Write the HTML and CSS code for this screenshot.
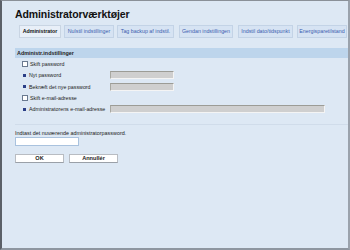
FILE: index.html
```html
<!DOCTYPE html>
<html>
<head>
<meta charset="utf-8">
<link rel="stylesheet" href="styles.css">
</head>
<body>
<div class="frame">
  <h1 class="title">Administratorværktøjer</h1>
  <div class="tabs">
    <span class="tab active t1">Administrator</span>
    <span class="tab t2">Nulstil indstillinger</span>
    <span class="tab t3">Tag backup af indstil.</span>
    <span class="tab t4">Gendan indstillingen</span>
    <span class="tab t5">Indstil dato/tidspunkt</span>
    <span class="tab t6">Energisparetilstand</span>
  </div>
  <div class="section">Administr.indstillinger</div>
  <div class="rows">
    <div class="row"><span class="check"></span><span>Skift password</span></div>
    <div class="row"><span class="bullet"></span><span class="label">Nyt password</span><span class="field short"></span></div>
    <div class="row"><span class="bullet"></span><span class="label">Bekræft det nye password</span><span class="field short"></span></div>
    <div class="row"><span class="check"></span><span>Skift e-mail-adresse</span></div>
    <div class="row"><span class="bullet"></span><span class="label">Administratorens e-mail-adresse</span><span class="field long"></span></div>
  </div>
  <div class="sep"></div>
  <div class="prompt">Indtast det nuværende administratorpassword.</div>
  <div class="pwd"></div>
  <div class="buttons">
    <span class="btn">OK</span>
    <span class="btn">Annullér</span>
  </div>
</div>
</body>
</html>
```
FILE: styles.css
```css
html, body {
  margin: 0;
  padding: 0;
  width: 350px;
  height: 250px;
  overflow: hidden;
}
body {
  font-family: "Liberation Sans", Arial, sans-serif;
  background: #dde8f4;
}
.frame {
  box-sizing: border-box;
  width: 350px;
  height: 250px;
  border-left: 2px solid #5b6068;
  border-top: 1px solid #8a9098;
  border-right: 2px solid #9aa2ac;
  border-bottom: 2px solid #8e96a0;
  background: #dde8f4;
  padding: 0 0 0 13px;
}
.title {
  margin: 6px 0 0 0;
  font-size: 10.5px;
  font-weight: bold;
  color: #111;
  line-height: 14px;
  letter-spacing: -0.1px;
}
.tabs {
  display: flex;
  margin: 4px 0 0 4px;
  height: 13px;
}
.tab {
  box-sizing: border-box;
  height: 13px;
  font-size: 5.3px;
  line-height: 11px;
  text-align: center;
  color: #3a5cae;
  background: #d6e3f3;
  border: 1px solid #c3d3e6;
  white-space: nowrap;
}
.tab.active {
  color: #111;
  font-weight: bold;
  background: #e8eff8;
  border-color: #c9d5e3;
}
.t1 { width: 42px; }
.t2 { width: 50px; margin-left: 3px; }
.t3 { width: 57px; margin-left: 3px; }
.t4 { width: 54px; margin-left: 5px; }
.t5 { width: 55px; margin-left: 5px; }
.t6 { width: 50px; margin-left: 4px; }
.section {
  margin-top: 10px;
  height: 10px;
  line-height: 10px;
  background: #bdd5ec;
  font-size: 5.4px;
  font-weight: bold;
  color: #222;
  padding-left: 2px;
}
.rows {
  display: flex;
  flex-direction: column;
  margin-top: 0.5px;
  padding-left: 7px;
}
.row {
  display: flex;
  align-items: center;
  height: 11.3px;
  font-size: 5.3px;
  color: #222;
}
.check {
  box-sizing: border-box;
  width: 6px;
  height: 6px;
  border: 1px solid #6a7a90;
  background: #fff;
  margin-right: 2px;
}
.bullet {
  width: 3px;
  height: 3px;
  background: #2a3e86;
  margin: 0 3px 0 1px;
}
.label {
  width: 81px;
}
.field {
  box-sizing: border-box;
  height: 8px;
  background: #cfcfcf;
  border-top: 1px solid #9c9c96;
  border-left: 1px solid #a8a8a2;
  border-right: 1px solid #f4f4f4;
  border-bottom: 1px solid #f4f4f4;
}
.field.short { width: 64px; }
.field.long { width: 215px; }
.sep {
  margin-top: 9px;
  height: 1px;
  background: #d0dcea;
}
.prompt {
  margin-top: 4px;
  font-size: 5.4px;
  color: #222;
  line-height: 8px;
}
.pwd {
  box-sizing: border-box;
  width: 64px;
  height: 9px;
  background: #fff;
  border: 1px solid #a9c2de;
}
.buttons {
  display: flex;
  gap: 5px;
  margin-top: 8px;
}
.btn {
  box-sizing: border-box;
  width: 49px;
  height: 9px;
  background: #fff;
  border: 1px solid #b8bcc2;
  border-bottom-color: #9aa0a8;
  font-size: 5.6px;
  font-weight: bold;
  color: #222;
  text-align: center;
  line-height: 7px;
}
```
